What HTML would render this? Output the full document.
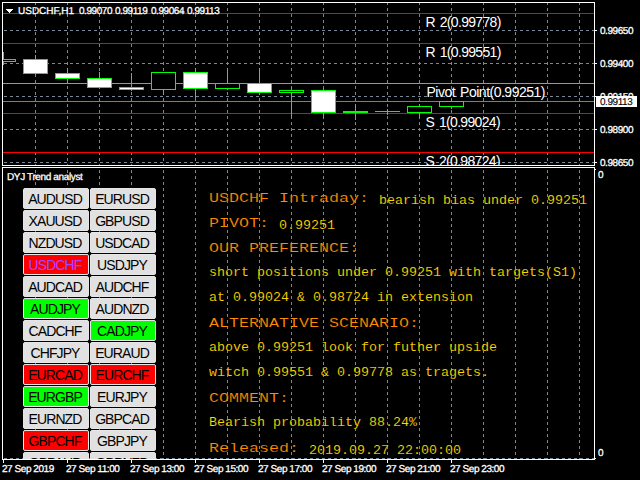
<!DOCTYPE html>
<html><head><meta charset="utf-8"><title>USDCHF,H1</title>
<style>
html,body{margin:0;padding:0;background:#000;}
body{width:640px;height:480px;position:relative;overflow:hidden;font-family:"Liberation Sans",sans-serif;}
#c{position:absolute;left:0;top:0;width:640px;height:480px;background:#000;overflow:hidden;}
.a{position:absolute;}
.h{position:absolute;height:1px;}
.v{position:absolute;width:1px;}
.gh{position:absolute;height:1px;background:repeating-linear-gradient(90deg,#778899 0,#778899 3px,transparent 3px,transparent 6px);}
.gv{position:absolute;width:1px;background:repeating-linear-gradient(180deg,#778899 0,#778899 3px,transparent 3px,transparent 6px);}
.ax{position:absolute;color:#fff;font-size:10px;line-height:10px;white-space:pre;letter-spacing:-0.45px;text-rendering:geometricPrecision;-webkit-text-stroke:0.3px #fff;}
.lb{position:absolute;color:#fff;font-size:14px;line-height:14px;white-space:nowrap;letter-spacing:-0.68px;word-spacing:1.6px;}
.bt{position:absolute;width:64px;height:19px;border:1px solid #e6e6e6;border-radius:2px;background:#e1e1e1;color:#000;font-size:14px;letter-spacing:-0.9px;line-height:21px;text-align:center;white-space:nowrap;}
.bt span{position:relative;left:-1px;}
.hd{position:absolute;-webkit-text-stroke:0.12px #000;color:#ff8c00;font-family:"Liberation Mono",monospace;font-size:13px;line-height:14px;white-space:pre;transform:scaleX(1.2821);transform-origin:0 0;}
.tx{position:absolute;-webkit-text-stroke:0.1px #000;color:#ffd700;font-family:"Liberation Mono",monospace;font-size:12px;line-height:12px;white-space:pre;transform:scaleX(1.1111);transform-origin:0 0;}
</style></head><body><div id="c">

<div class="a" style="left:3px;top:3px;width:591px;height:162px;overflow:hidden;">
<div class="gh" style="left:1px;top:27px;width:590px;"></div>
<div class="gh" style="left:1px;top:60px;width:590px;"></div>
<div class="gh" style="left:1px;top:93px;width:590px;"></div>
<div class="gh" style="left:1px;top:126px;width:590px;"></div>
<div class="gh" style="left:1px;top:159px;width:590px;"></div>
<div class="gv" style="left:32px;top:-1px;height:163px;"></div>
<div class="gv" style="left:64px;top:-1px;height:163px;"></div>
<div class="gv" style="left:96px;top:-1px;height:163px;"></div>
<div class="gv" style="left:128px;top:-1px;height:163px;"></div>
<div class="gv" style="left:160px;top:-1px;height:163px;"></div>
<div class="gv" style="left:192px;top:-1px;height:163px;"></div>
<div class="gv" style="left:224px;top:-1px;height:163px;"></div>
<div class="gv" style="left:256px;top:-1px;height:163px;"></div>
<div class="gv" style="left:288px;top:-1px;height:163px;"></div>
<div class="gv" style="left:320px;top:-1px;height:163px;"></div>
<div class="gv" style="left:352px;top:-1px;height:163px;"></div>
<div class="gv" style="left:384px;top:-1px;height:163px;"></div>
<div class="gv" style="left:416px;top:-1px;height:163px;"></div>
<div class="gv" style="left:448px;top:-1px;height:163px;"></div>
<div class="gv" style="left:480px;top:-1px;height:163px;"></div>
<div class="gv" style="left:512px;top:-1px;height:163px;"></div>
<div class="gv" style="left:544px;top:-1px;height:163px;"></div>
<div class="gv" style="left:576px;top:-1px;height:163px;"></div>
<div class="h" style="left:0px;top:10px;width:591px;background:#008000;"></div>
<div class="h" style="left:0px;top:40px;width:591px;background:#008000;"></div>
<div class="h" style="left:0px;top:80px;width:591px;background:#00ff00;"></div>
<div class="h" style="left:0px;top:98px;width:591px;background:#708090;"></div>
<div class="h" style="left:0px;top:110px;width:591px;background:#ff0000;"></div>
<div class="h" style="left:0px;top:149px;width:591px;background:#ff0000;"></div>
<div class="v" style="left:0px;top:49px;height:13px;background:#00ff00;"></div>
<div class="a" style="left:-12px;top:56px;width:23px;height:1px;border:1px solid #00ff00;background:#000;"></div>
<div class="v" style="left:32px;top:52px;height:20px;background:#00ff00;"></div>
<div class="a" style="left:20px;top:56px;width:23px;height:13px;border:1px solid #00ff00;background:#fff;"></div>
<div class="v" style="left:64px;top:65px;height:16px;background:#00ff00;"></div>
<div class="a" style="left:52px;top:70px;width:23px;height:4px;border:1px solid #00ff00;background:#fff;"></div>
<div class="v" style="left:96px;top:69px;height:17px;background:#00ff00;"></div>
<div class="a" style="left:84px;top:75px;width:23px;height:8px;border:1px solid #00ff00;background:#fff;"></div>
<div class="v" style="left:128px;top:70px;height:18px;background:#00ff00;"></div>
<div class="a" style="left:116px;top:84px;width:23px;height:1px;border:1px solid #00ff00;background:#fff;"></div>
<div class="v" style="left:160px;top:69px;height:23px;background:#00ff00;"></div>
<div class="a" style="left:148px;top:69px;width:23px;height:16px;border:1px solid #00ff00;background:#000;"></div>
<div class="v" style="left:192px;top:65px;height:30px;background:#00ff00;"></div>
<div class="a" style="left:180px;top:69px;width:23px;height:15px;border:1px solid #00ff00;background:#fff;"></div>
<div class="v" style="left:224px;top:65px;height:22px;background:#00ff00;"></div>
<div class="a" style="left:212px;top:80px;width:23px;height:4px;border:1px solid #00ff00;background:#000;"></div>
<div class="v" style="left:256px;top:65px;height:27px;background:#00ff00;"></div>
<div class="a" style="left:244px;top:80px;width:23px;height:8px;border:1px solid #00ff00;background:#fff;"></div>
<div class="v" style="left:288px;top:84px;height:31px;background:#00ff00;"></div>
<div class="a" style="left:276px;top:87px;width:23px;height:1px;border:1px solid #00ff00;background:#000;"></div>
<div class="v" style="left:320px;top:85px;height:30px;background:#00ff00;"></div>
<div class="a" style="left:308px;top:87px;width:23px;height:21px;border:1px solid #00ff00;background:#fff;"></div>
<div class="v" style="left:352px;top:101px;height:16px;background:#00ff00;"></div>
<div class="a" style="left:340px;top:108px;width:25px;height:2px;background:#00ff00;"></div>
<div class="v" style="left:384px;top:106px;height:6px;background:#00ff00;"></div>
<div class="a" style="left:372px;top:108px;width:25px;height:1px;background:#00ff00;"></div>
<div class="v" style="left:416px;top:101px;height:14px;background:#00ff00;"></div>
<div class="a" style="left:404px;top:103px;width:23px;height:5px;border:1px solid #00ff00;background:#000;"></div>
<div class="v" style="left:448px;top:96px;height:10px;background:#00ff00;"></div>
<div class="a" style="left:436px;top:98px;width:23px;height:4px;border:1px solid #00ff00;background:#000;"></div>
<div class="lb" style="left:422.5px;top:12px;">R 2(0.99778)</div>
<div class="lb" style="left:422.5px;top:42px;">R 1(0.99551)</div>
<div class="lb" style="left:423.5px;top:82px;letter-spacing:-0.5px;">Pivot Point(0.99251)</div>
<div class="lb" style="left:422.5px;top:112px;">S 1(0.99024)</div>
<div class="lb" style="left:422.5px;top:151px;">S 2(0.98724)</div>
</div>
<div class="h" style="left:6px;top:9px;width:7px;background:#fff;"></div>
<div class="h" style="left:7px;top:10px;width:5px;background:#fff;"></div>
<div class="h" style="left:8px;top:11px;width:3px;background:#fff;"></div>
<div class="h" style="left:9px;top:12px;width:1px;background:#fff;"></div>
<div class="ax" style="left:18px;top:7px;letter-spacing:0px;">USDCHF,H1</div>
<div class="ax" style="left:79px;top:7px;">0.99070</div>
<div class="ax" style="left:115px;top:7px;">0.99119</div>
<div class="ax" style="left:151px;top:7px;">0.99064</div>
<div class="ax" style="left:187px;top:7px;">0.99113</div>
<div class="h" style="left:2px;top:2px;width:593px;background:#fff;"></div>
<div class="h" style="left:2px;top:165px;width:593px;background:#fff;"></div>
<div class="v" style="left:2px;top:2px;height:164px;background:#fff;"></div>
<div class="v" style="left:594px;top:2px;height:164px;background:#fff;"></div>
<div class="h" style="left:595px;top:30px;width:2px;background:#fff;"></div>
<div class="ax" style="left:600px;top:27px;">0.99650</div>
<div class="h" style="left:595px;top:63px;width:2px;background:#fff;"></div>
<div class="ax" style="left:600px;top:60px;">0.99400</div>
<div class="h" style="left:595px;top:96px;width:2px;background:#fff;"></div>
<div class="ax" style="left:600px;top:93px;">0.99150</div>
<div class="h" style="left:595px;top:129px;width:2px;background:#fff;"></div>
<div class="ax" style="left:600px;top:126px;">0.98900</div>
<div class="h" style="left:595px;top:162px;width:2px;background:#fff;"></div>
<div class="ax" style="left:600px;top:159px;">0.98650</div>
<div class="a" style="left:596px;top:96px;width:41px;height:11px;background:#fff;"></div>
<div class="ax" style="left:600px;top:98px;color:#000;-webkit-text-stroke:0.1px #000;">0.99113</div>
<div class="a" style="left:3px;top:168px;width:591px;height:291px;overflow:hidden;">
<div class="gv" style="left:32px;top:-4px;height:295px;"></div>
<div class="gv" style="left:64px;top:-4px;height:295px;"></div>
<div class="gv" style="left:96px;top:-4px;height:295px;"></div>
<div class="gv" style="left:128px;top:-4px;height:295px;"></div>
<div class="gv" style="left:160px;top:-4px;height:295px;"></div>
<div class="gv" style="left:192px;top:-4px;height:295px;"></div>
<div class="gv" style="left:224px;top:-4px;height:295px;"></div>
<div class="gv" style="left:256px;top:-4px;height:295px;"></div>
<div class="gv" style="left:288px;top:-4px;height:295px;"></div>
<div class="gv" style="left:320px;top:-4px;height:295px;"></div>
<div class="gv" style="left:352px;top:-4px;height:295px;"></div>
<div class="gv" style="left:384px;top:-4px;height:295px;"></div>
<div class="gv" style="left:416px;top:-4px;height:295px;"></div>
<div class="gv" style="left:448px;top:-4px;height:295px;"></div>
<div class="gv" style="left:480px;top:-4px;height:295px;"></div>
<div class="gv" style="left:512px;top:-4px;height:295px;"></div>
<div class="gv" style="left:544px;top:-4px;height:295px;"></div>
<div class="gv" style="left:576px;top:-4px;height:295px;"></div>
<div class="gh" style="left:1px;top:290px;width:590px;"></div>
<div class="ax" style="left:4px;top:5px;letter-spacing:-0.37px;">DYJ Trend analyst</div>
<div class="bt" style="left:20px;top:20px;"><span>AUDUSD</span></div>
<div class="bt" style="left:87px;top:20px;"><span>EURUSD</span></div>
<div class="bt" style="left:20px;top:42px;"><span>XAUUSD</span></div>
<div class="bt" style="left:87px;top:42px;"><span>GBPUSD</span></div>
<div class="bt" style="left:20px;top:64px;"><span>NZDUSD</span></div>
<div class="bt" style="left:87px;top:64px;"><span>USDCAD</span></div>
<div class="bt" style="left:20px;top:86px;background:#ff0000;color:#a048ff;"><span>USDCHF</span></div>
<div class="bt" style="left:87px;top:86px;"><span>USDJPY</span></div>
<div class="bt" style="left:20px;top:108px;"><span>AUDCAD</span></div>
<div class="bt" style="left:87px;top:108px;"><span>AUDCHF</span></div>
<div class="bt" style="left:20px;top:130px;background:#00ff00;"><span>AUDJPY</span></div>
<div class="bt" style="left:87px;top:130px;"><span>AUDNZD</span></div>
<div class="bt" style="left:20px;top:152px;"><span>CADCHF</span></div>
<div class="bt" style="left:87px;top:152px;background:#00ff00;"><span>CADJPY</span></div>
<div class="bt" style="left:20px;top:174px;"><span>CHFJPY</span></div>
<div class="bt" style="left:87px;top:174px;"><span>EURAUD</span></div>
<div class="bt" style="left:20px;top:196px;background:#ff0000;"><span>EURCAD</span></div>
<div class="bt" style="left:87px;top:196px;background:#ff0000;"><span>EURCHF</span></div>
<div class="bt" style="left:20px;top:218px;background:#00ff00;"><span>EURGBP</span></div>
<div class="bt" style="left:87px;top:218px;"><span>EURJPY</span></div>
<div class="bt" style="left:20px;top:240px;"><span>EURNZD</span></div>
<div class="bt" style="left:87px;top:240px;"><span>GBPCAD</span></div>
<div class="bt" style="left:20px;top:262px;background:#ff0000;"><span>GBPCHF</span></div>
<div class="bt" style="left:87px;top:262px;"><span>GBPJPY</span></div>
<div class="bt" style="left:20px;top:284px;"><span>GBPAUD</span></div>
<div class="bt" style="left:87px;top:284px;"><span>GBPNZD</span></div>
<div class="hd" style="left:206px;top:24px;">USDCHF Intraday:</div>
<div class="tx" style="left:376px;top:27px;">bearish bias under 0.99251</div>
<div class="hd" style="left:206px;top:49px;">PIVOT:</div>
<div class="tx" style="left:276px;top:52px;">0.99251</div>
<div class="hd" style="left:206px;top:74px;">OUR PREFERENCE:</div>
<div class="tx" style="left:206px;top:99px;">short positions under 0.99251 with targets(S1)</div>
<div class="tx" style="left:206px;top:124px;">at 0.99024 &amp; 0.98724 in extension</div>
<div class="hd" style="left:206px;top:149px;">ALTERNATIVE SCENARIO:</div>
<div class="tx" style="left:206px;top:174px;">above 0.99251 look for futher upside</div>
<div class="tx" style="left:206px;top:199px;">witch 0.99551 &amp; 0.99778 as tragets.</div>
<div class="hd" style="left:206px;top:224px;">COMMENT:</div>
<div class="tx" style="left:206px;top:249px;">Bearish probability 88.24%</div>
<div class="hd" style="left:206px;top:274px;">Released:</div>
<div class="tx" style="left:306px;top:277px;">2019.09.27 22:00:00</div>
</div>
<div class="h" style="left:2px;top:167px;width:593px;background:#fff;"></div>
<div class="h" style="left:2px;top:459px;width:593px;background:#fff;"></div>
<div class="v" style="left:2px;top:167px;height:293px;background:#fff;"></div>
<div class="v" style="left:594px;top:167px;height:293px;background:#fff;"></div>
<div class="h" style="left:595px;top:169px;width:1px;background:#fff;"></div>
<div class="h" style="left:595px;top:458px;width:1px;background:#fff;"></div>
<div class="ax" style="left:598px;top:171px;">0</div>
<div class="ax" style="left:598px;top:449px;">0</div>
<div class="v" style="left:3px;top:460px;height:3px;background:#fff;"></div>
<div class="ax" style="left:2px;top:465px;">27 Sep 2019</div>
<div class="v" style="left:67px;top:460px;height:3px;background:#fff;"></div>
<div class="ax" style="left:66px;top:465px;">27 Sep 11:00</div>
<div class="v" style="left:131px;top:460px;height:3px;background:#fff;"></div>
<div class="ax" style="left:130px;top:465px;">27 Sep 13:00</div>
<div class="v" style="left:195px;top:460px;height:3px;background:#fff;"></div>
<div class="ax" style="left:194px;top:465px;">27 Sep 15:00</div>
<div class="v" style="left:259px;top:460px;height:3px;background:#fff;"></div>
<div class="ax" style="left:258px;top:465px;">27 Sep 17:00</div>
<div class="v" style="left:323px;top:460px;height:3px;background:#fff;"></div>
<div class="ax" style="left:322px;top:465px;">27 Sep 19:00</div>
<div class="v" style="left:387px;top:460px;height:3px;background:#fff;"></div>
<div class="ax" style="left:386px;top:465px;">27 Sep 21:00</div>
<div class="v" style="left:451px;top:460px;height:3px;background:#fff;"></div>
<div class="ax" style="left:450px;top:465px;">27 Sep 23:00</div>
</div></body></html>
